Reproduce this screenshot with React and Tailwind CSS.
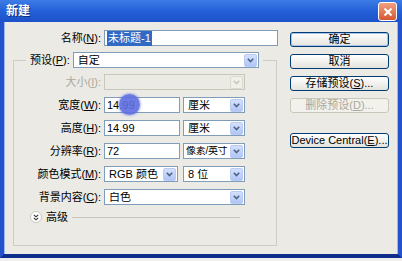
import React from "react";

function Arrow({ disabled }) {
  return (
    <div
      className={`mr-[1px] flex h-[13px] w-[13px] shrink-0 items-center justify-center rounded-[2px] ${
        disabled
          ? "bg-[#f0efea] border border-[#dcdad0]"
          : "bg-linear-to-b from-[#d4e0fd] to-[#b1c5f5] border border-[#b9cbf3]"
      }`}
    >
      <svg width="7" height="5" viewBox="0 0 7 5">
        <path
          d="M0.8 0.8 L3.5 3.5 L6.2 0.8"
          fill="none"
          stroke={disabled ? "#c9c7ba" : "#4d6185"}
          strokeWidth="1.6"
        />
      </svg>
    </div>
  );
}

function Select({ w, text, disabled, tight }) {
  return (
    <div
      className={`flex h-[16px] items-center border ${w} ${
        disabled ? "border-[#c9c7ba] bg-[#ebeae5]" : "border-[#7f9db9] bg-white"
      }`}
    >
      <span
        className={`flex-1 overflow-hidden whitespace-nowrap leading-none text-black ${
          tight ? "pl-[2px] text-[10px] tracking-[-0.3px]" : "pl-[4px] text-[11px]"
        }`}
      >
        {text}
      </span>
      <Arrow disabled={disabled} />
    </div>
  );
}

function Input({ w, children }) {
  return (
    <div className={`relative flex h-[16px] items-center border border-[#7f9db9] bg-white pl-[2px] text-[11px] leading-none text-black ${w}`}>
      {children}
    </div>
  );
}

function Label({ children, disabled }) {
  return (
    <div
      className={`w-[87px] shrink-0 text-right text-[11px] leading-none ${
        disabled ? "text-[#aca899]" : "text-black"
      }`}
    >
      {children}
    </div>
  );
}

function Btn({ children, def, disabled, extra }) {
  return (
    <div
      className={`flex h-[15px] w-[99px] items-center justify-center rounded-[3px] border text-[11px] leading-none ${
        extra || ""
      } ${
        disabled
          ? "border-[#c9c7ba] bg-[#f2f1ec] text-[#aca899]"
          : def
          ? "border-[#003c74] bg-linear-to-b from-white to-[#e4e3dc] text-black shadow-[inset_0_0_0_1px_#a8c4ee]"
          : "border-[#003c74] bg-linear-to-b from-white to-[#e4e3dc] text-black"
      }`}
    >
      {children}
    </div>
  );
}

export default function App() {
  return (
    <div className="h-[261px] w-[402px] overflow-hidden bg-[#eeeeee] font-['Liberation_Sans','Noto_Sans_CJK_SC',sans-serif]">
      <div className="flex h-[258px] flex-col">
        {/* Title bar */}
        <div className="flex h-[22px] shrink-0 items-center justify-between bg-linear-to-b from-[#3d7ce6] via-[#2460d8] to-[#1d52c8] pl-[6px] pr-[5px]">
          <span className="text-[12px] font-bold leading-none text-white [text-shadow:1px_1px_0_#10307a]">新建</span>
          <div className="mt-[1px] flex h-[19px] w-[19px] items-center justify-center rounded-[3px] border border-white bg-linear-to-b from-[#f0a080] to-[#d5552f]">
            <svg width="10" height="10" viewBox="0 0 10 10">
              <path d="M1.5 1.5 L8.5 8.5 M8.5 1.5 L1.5 8.5" stroke="white" strokeWidth="2" />
            </svg>
          </div>
        </div>

        {/* Body */}
        <div className="flex flex-1 border-x-[4px] border-b-[4px] border-x-[#2352cc] border-b-[#0e2d8c] bg-[#ebeae5] shadow-[inset_1px_0_0_#9db8ef,inset_-1px_0_0_#9db8ef]">
          {/* Left column */}
          <div className="w-[279px] shrink-0 pl-[9px] pt-[8px]">
            <div className="flex items-center">
              <div className="w-[88px] shrink-0 text-right text-[11px] leading-none text-black">
                名称(<span className="underline">N</span>):
              </div>
              <div className="ml-[3px]">
                <Input w="w-[174px]">
                  <span className="bg-[#316ac5] px-[1px] py-[2px] text-white">未标题-1</span>
                </Input>
              </div>
            </div>

            <fieldset className="mt-[6px] w-[264px] border border-[#cfcdc2] pb-[22px] pt-[6px]">
              <legend className="ml-[12px] px-[3px]">
                <div className="flex items-center gap-[3px] pr-[1px]">
                  <span className="pl-[1px] text-[11px] leading-none text-black">
                    预设(<span className="underline">P</span>):
                  </span>
                  <Select w="w-[186px]" text="自定" />
                </div>
              </legend>

              <div className="flex flex-col gap-[7px]">
                <div className="flex items-center">
                  <Label disabled>
                    大小(<span className="underline">I</span>):
                  </Label>
                  <div className="ml-[3px]">
                    <Select w="w-[141px]" text="" disabled />
                  </div>
                </div>

                <div className="flex items-center">
                  <Label>
                    宽度(<span className="underline">W</span>):
                  </Label>
                  <div className="ml-[3px] flex gap-[3px]">
                    <Input w="w-[76px]">
                      <span>14.99</span>
                      <div className="absolute left-[14px] top-[-4px] h-[21px] w-[21px] rounded-full bg-[#5d6ee0]/90 shadow-[0_0_3px_#5d6ee0]" />
                    </Input>
                    <Select w="w-[62px]" text="厘米" />
                  </div>
                </div>

                <div className="flex items-center">
                  <Label>
                    高度(<span className="underline">H</span>):
                  </Label>
                  <div className="ml-[3px] flex gap-[3px]">
                    <Input w="w-[76px]">14.99</Input>
                    <Select w="w-[62px]" text="厘米" />
                  </div>
                </div>

                <div className="flex items-center">
                  <Label>
                    分辨率(<span className="underline">R</span>):
                  </Label>
                  <div className="ml-[3px] flex gap-[3px]">
                    <Input w="w-[76px]">72</Input>
                    <Select w="w-[62px]" text="像素/英寸" tight />
                  </div>
                </div>

                <div className="flex items-center">
                  <Label>
                    颜色模式(<span className="underline">M</span>):
                  </Label>
                  <div className="ml-[3px] flex gap-[5px]">
                    <Select w="w-[74px]" text="RGB 颜色" />
                    <Select w="w-[62px]" text="8 位" />
                  </div>
                </div>

                <div className="flex items-center">
                  <Label>
                    背景内容(<span className="underline">C</span>):
                  </Label>
                  <div className="ml-[3px]">
                    <Select w="w-[141px]" text="白色" />
                  </div>
                </div>
              </div>

              <div className="mt-[6px] flex h-[12px] items-center pl-[16px]">
                <div className="flex h-[12px] w-[12px] items-center justify-center rounded-full border border-[#c8c6bc] bg-white">
                  <svg width="6" height="7" viewBox="0 0 6 7">
                    <path d="M0.8 0.8 L3 2.8 L5.2 0.8 M0.8 3.8 L3 5.8 L5.2 3.8" fill="none" stroke="#333" strokeWidth="1.1" />
                  </svg>
                </div>
                <span className="ml-[4px] text-[11px] leading-none text-black">高级</span>
                <div className="ml-[4px] h-px w-[168px] bg-[#c8c6bc]" />
              </div>
            </fieldset>
          </div>

          {/* Right column */}
          <div className="flex flex-col gap-[7px] pl-[7px] pt-[10px]">
            <Btn def>确定</Btn>
            <Btn>取消</Btn>
            <Btn>
              存储预设(<span className="underline">S</span>)...
            </Btn>
            <Btn disabled>
              删除预设(<span className="underline">D</span>)...
            </Btn>
            <Btn extra="mt-[13px]">
              Device Central(<span className="underline">E</span>)...
            </Btn>
          </div>
        </div>
      </div>
    </div>
  );
}
